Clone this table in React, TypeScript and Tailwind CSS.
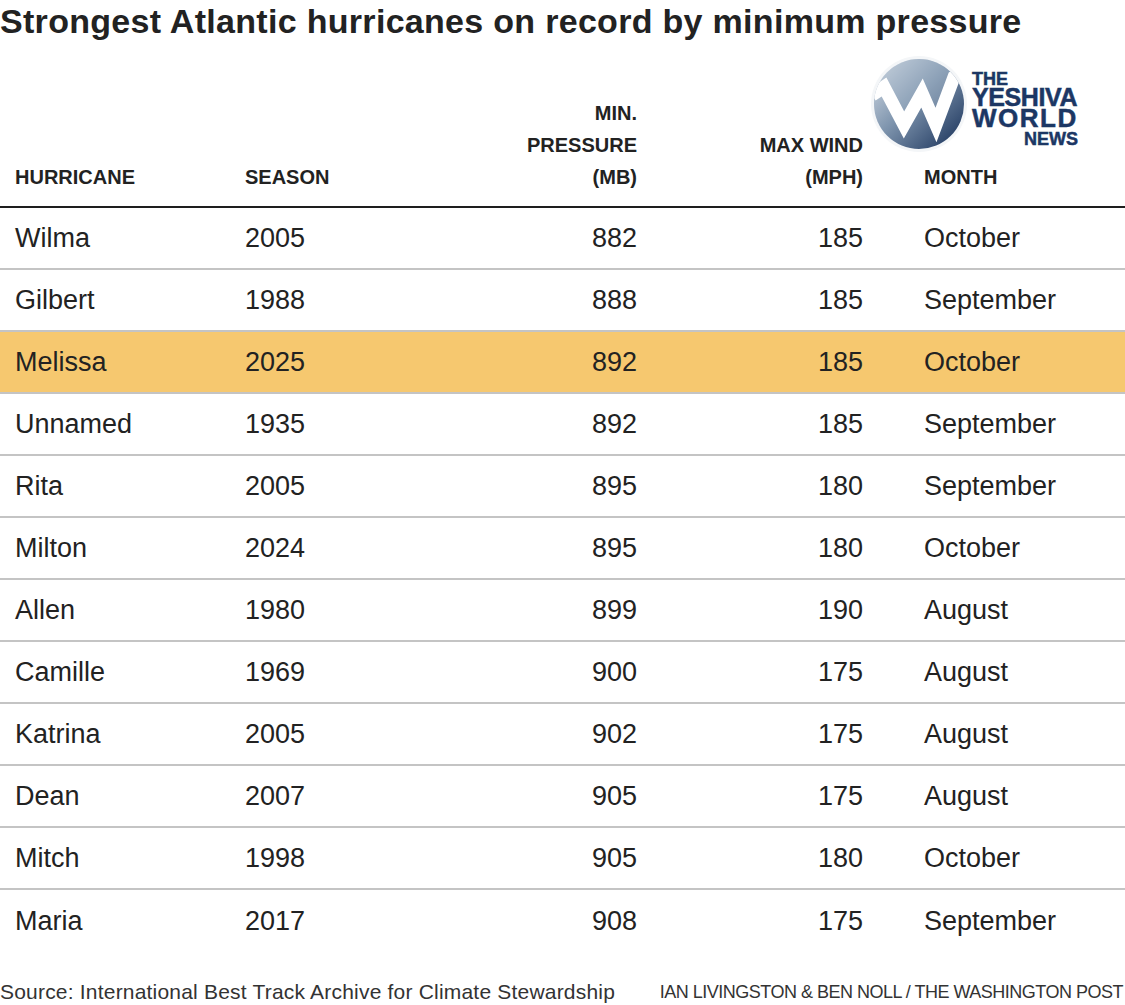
import React from 'react'

type Row = {
  name: string
  season: string
  pressure: string
  wind: string
  month: string
  highlight?: boolean
}

const rows: Row[] = [
  { name: 'Wilma', season: '2005', pressure: '882', wind: '185', month: 'October' },
  { name: 'Gilbert', season: '1988', pressure: '888', wind: '185', month: 'September' },
  { name: 'Melissa', season: '2025', pressure: '892', wind: '185', month: 'October', highlight: true },
  { name: 'Unnamed', season: '1935', pressure: '892', wind: '185', month: 'September' },
  { name: 'Rita', season: '2005', pressure: '895', wind: '180', month: 'September' },
  { name: 'Milton', season: '2024', pressure: '895', wind: '180', month: 'October' },
  { name: 'Allen', season: '1980', pressure: '899', wind: '190', month: 'August' },
  { name: 'Camille', season: '1969', pressure: '900', wind: '175', month: 'August' },
  { name: 'Katrina', season: '2005', pressure: '902', wind: '175', month: 'August' },
  { name: 'Dean', season: '2007', pressure: '905', wind: '175', month: 'August' },
  { name: 'Mitch', season: '1998', pressure: '905', wind: '180', month: 'October' },
  { name: 'Maria', season: '2017', pressure: '908', wind: '175', month: 'September' }
]

// hurricane | season | pressure (right) | wind (right) | month
const cols = 'grid grid-cols-[230px_200px_192px_226px_1fr] pl-[15px]'

function Logo() {
  return (
    <>
      <svg className="absolute left-[870px] top-[55px]" width="98" height="98" viewBox="0 0 98 98">
        <defs>
          <linearGradient id="ywn-g" x1="0" y1="0" x2="1" y2="1">
            <stop offset="0" stopColor="#dbe2ea" />
            <stop offset="0.45" stopColor="#7f95ae" />
            <stop offset="1" stopColor="#132c55" />
          </linearGradient>
          <clipPath id="ywn-c">
            <circle cx="49" cy="49" r="45" />
          </clipPath>
        </defs>
        <circle cx="49" cy="49" r="48" fill="#f4f6f8" />
        <circle cx="49" cy="49" r="45" fill="url(#ywn-g)" />
        <g clipPath="url(#ywn-c)">
          <path d="M0 50 L18 38 L34 70 L50 42 L64 70 L84 20 L100 10 L100 0 L0 0 Z" fill="#a9b9cc" opacity="0.35" />
          <polyline
            points="2,40 14,32 34,70 52,38 66,70 84,22 98,14"
            fill="none"
            stroke="#ffffff"
            strokeWidth="13"
            strokeLinejoin="miter"
          />
        </g>
      </svg>
      <div className="absolute left-[972px] top-[71px] flex w-[108px] flex-col font-['Liberation_Sans',Arial,sans-serif] font-bold text-[#1c3764] [-webkit-text-stroke:0.5px_#1c3764] [text-shadow:0_0_3px_#fff,0_0_3px_#fff]">
        <span className="h-[16px] text-[18px] leading-[16px]">THE</span>
        <span className="h-[21px] text-[25px] leading-[21px] tracking-[-0.4px]">YESHIVA</span>
        <span className="h-[21px] text-[26px] leading-[21px] tracking-[1.5px]">WORLD</span>
        <span className="mt-[2px] h-[16px] self-end pr-[2px] text-[18px] leading-[16px]">NEWS</span>
      </div>
    </>
  )
}

export default function App() {
  return (
    <div className="relative w-[1125px] h-[1005px] bg-white text-[#222] font-['Liberation_Sans',Arial,sans-serif] overflow-hidden">
      <h1 className="h-[40px] pt-[3px] text-[34px] leading-[36px] font-bold tracking-[0.3px] text-[#222] whitespace-nowrap">
        Strongest Atlantic hurricanes on record by minimum pressure
      </h1>

      <div className={`${cols} h-[168px] items-end pb-[13px] border-b-2 border-[#1e1e1e] text-[20px] leading-[32px] font-bold uppercase`}>
        <div>Hurricane</div>
        <div>Season</div>
        <div className="text-right">
          Min.
          <br />
          Pressure
          <br />
          (MB)
        </div>
        <div className="text-right">
          Max wind
          <br />
          (MPH)
        </div>
        <div className="pl-[61px]">Month</div>
      </div>

      {rows.map((r, i) => (
        <div
          key={r.name}
          className={`${cols} h-[62px] items-center text-[27px] ${
            i < rows.length - 1 ? 'border-b-2 border-[#c4c4c4]' : 'h-[60px]'
          } ${r.highlight ? 'bg-[#f6c86f]' : ''}`}
        >
          <div>{r.name}</div>
          <div>{r.season}</div>
          <div className="text-right">{r.pressure}</div>
          <div className="text-right">{r.wind}</div>
          <div className="pl-[61px]">{r.month}</div>
        </div>
      ))}

      <div className="flex justify-between pt-[28px] leading-[24px] text-[#333]">
        <span className="text-[21px] tracking-[0.2px]">Source: International Best Track Archive for Climate Stewardship</span>
        <span className="pr-[2px] text-[18px] tracking-[-0.5px]">IAN LIVINGSTON &amp; BEN NOLL / THE WASHINGTON POST</span>
      </div>

      <Logo />
    </div>
  )
}
